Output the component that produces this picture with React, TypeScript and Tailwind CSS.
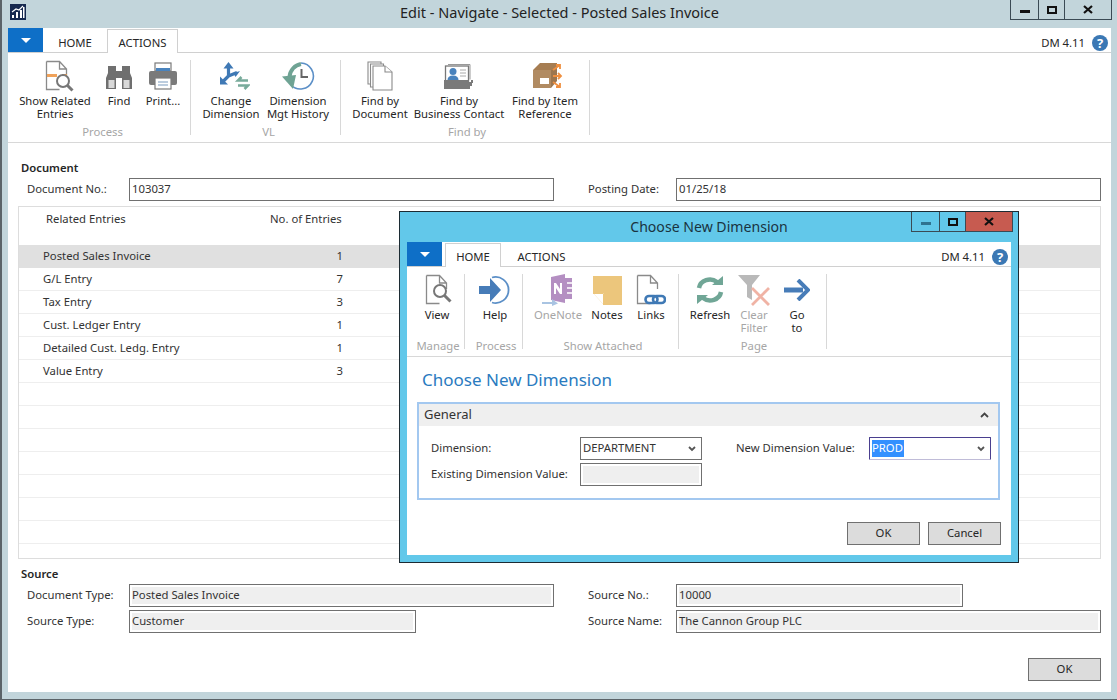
import type { ReactNode } from "react";

const font = { fontFamily: '"Noto Sans", "Open Sans", sans-serif' };

function Logo() {
  return (
    <svg width="16" height="16" viewBox="0 0 16 16">
      <rect width="16" height="16" fill="#16294f" />
      <path d="M2 14v-3h2v3zM6 14V8h2v6zM10 14V6h2v8z" fill="#fff" />
      <path d="M2 8l4-3 3 1 4-4" stroke="#fff" strokeWidth="1.2" fill="none" />
      <path d="M13 14V3h1.5v11z" fill="#fff" />
    </svg>
  );
}

function DocOutline({ color = "#8a8a8a" }: { color?: string }) {
  return <path d="M1.5 1.5h13l7 7.5v6M14.5 1.5V9h7M1.5 1.5v28h13" fill="none" stroke={color} strokeWidth="1.3" />;
}

function RelatedIcon() {
  return (
    <svg className="ml-[9px]" width="30" height="32" viewBox="0 0 30 32">
      <DocOutline />
      <rect x="2" y="14" width="10" height="3" fill="#f0a25a" />
      <rect x="17" y="14" width="5" height="2" fill="#f0a25a" />
      <circle cx="18" cy="21" r="6" fill="#fff" stroke="#777" strokeWidth="2" />
      <path d="M22.5 25.5l5 5" stroke="#777" strokeWidth="3" />
    </svg>
  );
}

function BinocularsIcon() {
  return (
    <svg width="28" height="26" viewBox="0 0 28 26">
      <path d="M3 3h8v5h6V3h8v7l2 5v11h-10V15h-6v11H1V15l2-5z" fill="#6f6f6f" />
      <rect x="3.5" y="17" width="6" height="8" fill="#d8d8d8" />
      <rect x="18.5" y="17" width="6" height="8" fill="#d8d8d8" />
    </svg>
  );
}

function PrinterIcon() {
  return (
    <svg width="30" height="28" viewBox="0 0 30 28">
      <rect x="7" y="1" width="16" height="8" fill="#fff" stroke="#7a7a7a" strokeWidth="1.2" />
      <rect x="8" y="6" width="14" height="3" fill="#4a83bd" />
      <path d="M3 9h24a2 2 0 0 1 2 2v10a2 2 0 0 1-2 2H3a2 2 0 0 1-2-2V11a2 2 0 0 1 2-2z" fill="#7a7a7a" />
      <rect x="7" y="16" width="16" height="11" fill="#fff" stroke="#7a7a7a" strokeWidth="1.2" />
      <path d="M10 20h10M10 23h10" stroke="#7a9cc0" strokeWidth="1.2" />
    </svg>
  );
}

function ChangeDimIcon() {
  return (
    <svg className="ml-[7px]" width="30" height="30" viewBox="0 0 30 30">
      <path d="M8.5 15V5M8.5 15L3.5 20M8.5 15L17 11.5" fill="none" stroke="#3f79b5" strokeWidth="3.2" />
      <path d="M8.5 1l5 6.5h-10zM0 23.5v-8l8 8zM20 10l-4.500 6-2-4z" fill="#3f79b5" />
      <path d="M28 19.5H18l3.5-3.5" fill="none" stroke="#78ab9b" strokeWidth="2.6" />
      <path d="M18 24.5h10l-3.5 3.5" fill="none" stroke="#78ab9b" strokeWidth="2.6" />
    </svg>
  );
}

function HistoryIcon() {
  return (
    <svg width="33" height="29" viewBox="0 0 33 29">
      <path d="M19 1A13 13 0 1 1 9 23" fill="none" stroke="#5b8fc7" strokeWidth="1.6" />
      <path d="M7.5 15C8 8 13 3 19 2" fill="none" stroke="#6fa394" strokeWidth="4" />
      <path d="M0 14.5l14-1.5-3 14z" fill="#6fa394" />
      <path d="M19.5 7v8h6.5" fill="none" stroke="#666" strokeWidth="2" />
    </svg>
  );
}

function DocStackIcon() {
  return (
    <svg width="26" height="30" viewBox="0 0 26 30" fill="#fff" stroke="#8a8a8a" strokeWidth="1.1">
      <path d="M1 1h13v22H1z" />
      <path d="M3.5 3h13v23h-13z" />
      <path d="M6 5h12l7 6v18H6z" />
      <path d="M18 5v6h7" />
    </svg>
  );
}

function ContactIcon() {
  return (
    <svg width="30" height="27" viewBox="0 0 30 27">
      <path d="M4 1.5h22v15" fill="none" stroke="#999" strokeWidth="1" />
      <rect x="1.5" y="3" width="23" height="17" fill="#fff" stroke="#777" strokeWidth="1.3" />
      <circle cx="9" cy="8.5" r="3.5" fill="#4a83bd" />
      <path d="M3.5 17c0-3 2-4.5 5.5-4.5s5.500 1.500 5.500 4.500z" fill="#4a83bd" />
      <path d="M16 7h6M16 10h6M16 13h6" stroke="#aaa" strokeWidth="1" />
      <path d="M0 17h25v2h2v-2h2v3h-1v3h-2v3H0z" fill="#7a7a7a" />
    </svg>
  );
}

function ItemRefIcon() {
  return (
    <svg className="ml-[6px]" width="30" height="28" viewBox="0 0 30 28">
      <path d="M0 8l7-7h17v7z" fill="#a67d52" />
      <rect y="8" width="18" height="18" fill="#b18b62" />
      <path d="M18 8h6v11l-6 7z" fill="#9c764e" />
      <rect x="7" y="16" width="9" height="6" fill="#fff" />
      <path d="M20 14h8M25 11l3 3-3 3M20 8l7-5M23 3h4v4M20 20l7 5M23 25h4v-4" fill="none" stroke="#ef8f3f" strokeWidth="1.8" />
    </svg>
  );
}

function ViewIcon() {
  return (
    <svg className="ml-[3px]" width="28" height="32" viewBox="0 0 28 32">
      <DocOutline />
      <circle cx="15" cy="17" r="6" fill="#fff" stroke="#777" strokeWidth="2" />
      <path d="M19.5 21.5l6 6" stroke="#777" strokeWidth="3" />
    </svg>
  );
}

function HelpArrowIcon() {
  return (
    <svg width="32" height="30" viewBox="0 0 32 30">
      <path d="M13 2.5A13 13 0 1 1 13 27.5" fill="none" stroke="#5b8fc7" strokeWidth="1.8" />
      <path d="M0 11h11V3l11 12-11 12v-8H0z" fill="#477cb8" />
    </svg>
  );
}

function OneNoteIcon() {
  return (
    <svg width="32" height="32" viewBox="0 0 32 32">
      <path d="M9 3l14-3v29l-14-3z" fill="#b48fc2" />
      <rect x="23" y="4" width="7" height="21" fill="#b48fc2" />
      <path d="M25 9h5M25 14h5M25 19h5" stroke="#fff" strokeWidth="1.4" />
      <path d="M12 20v-11h2l4 6v-6h2v11h-2l-4-6v6z" fill="#fff" />
      <path d="M0 28h10v-3l6 4.5-6 2.5v-2H0z" fill="#a9c4e2" />
    </svg>
  );
}

function NotesIcon() {
  return (
    <svg width="29" height="29" viewBox="0 0 29 29">
      <path d="M0 0h29v29H11L0 17z" fill="#ecc67c" />
      <path d="M0 17h11v12z" fill="#fff" />
      <path d="M0 17.5h10.5V29" fill="none" stroke="#ecc67c" strokeWidth="1" />
    </svg>
  );
}

function LinksIcon() {
  return (
    <svg width="30" height="32" viewBox="0 0 30 32">
      <DocOutline />
      <rect x="9.5" y="22" width="12" height="7" rx="3.5" fill="none" stroke="#3f79b5" strokeWidth="2.6" />
      <rect x="17" y="22" width="12" height="7" rx="3.5" fill="none" stroke="#3f79b5" strokeWidth="2.6" />
    </svg>
  );
}

function RefreshIcon() {
  return (
    <svg width="28" height="28" viewBox="0 0 28 28">
      <path d="M3 12A11 10 0 0 1 21 6" fill="none" stroke="#70a696" strokeWidth="4.5" />
      <path d="M16 9h11V0z" fill="#70a696" />
      <path d="M25 16A11 10 0 0 1 7 22" fill="none" stroke="#70a696" strokeWidth="4.5" />
      <path d="M12 19H1v9z" fill="#70a696" />
    </svg>
  );
}

function ClearFilterIcon() {
  return (
    <svg width="32" height="31" viewBox="0 0 32 31">
      <path d="M0 0h22l-8 10v15l-5-3V10z" fill="#b9b9b9" />
      <path d="M14 30l17-17M14 13l17 17" stroke="#f0b3a5" strokeWidth="2.8" />
    </svg>
  );
}

function GoToIcon() {
  return (
    <svg width="26" height="22" viewBox="0 0 26 22">
      <path d="M0 8.5h19v5H0z" fill="#477cb8" />
      <path d="M14 1l10 10-10 10" fill="none" stroke="#477cb8" strokeWidth="4" />
    </svg>
  );
}

function ChevronDown() {
  return (
    <svg width="8" height="6" viewBox="0 0 8 6">
      <path d="M1 1l3 3 3-3" fill="none" stroke="#555" strokeWidth="1.8" />
    </svg>
  );
}

function WindowButtons({ dialog }: { dialog?: boolean }) {
  return (
    <div className="flex h-[20px] border-r border-b border-l border-[#3a4a54]">
      <div className="flex w-[28px] items-center justify-center border-r border-[#3a4a54]">
        <div className={dialog ? "mt-[3px] h-[3px] w-[10px] bg-[#2f7390]" : "mt-[3px] h-[3px] w-[10px] bg-[#111]"} />
      </div>
      <div className="flex w-[26px] items-center justify-center border-r border-[#3a4a54]">
        <div className="h-[8px] w-[10px] border-2 border-[#111]" />
      </div>
      <div className={dialog ? "flex w-[46px] items-center justify-center bg-[#c75b50]" : "flex w-[46px] items-center justify-center"}>
        <svg width="10" height="9" viewBox="0 0 10 9">
          <path d="M1 1l8 7M9 1L1 8" stroke="#111" strokeWidth="2.2" />
        </svg>
      </div>
    </div>
  );
}

function HelpDot() {
  return (
    <div className="flex h-[16px] w-[16px] items-center justify-center rounded-full bg-[#3b78b4] text-[13px] leading-none font-bold text-white">
      ?
    </div>
  );
}

function TabsRow({ active }: { active: "HOME" | "ACTIONS" }) {
  const tab = (name: string, cls: string) =>
    active === name ? (
      <div className={"relative -mb-px flex h-[24px] items-center justify-center border border-b-0 border-[#d0d0d0] bg-white pt-[4px] " + cls}>{name}</div>
    ) : (
      <div className={"flex h-[24px] items-center justify-center pt-[6px] " + cls}>{name}</div>
    );
  return (
    <div className="flex h-[25px] items-end border-b border-[#d0d0d0] text-[11.3px] text-[#262626]">
      <div className="flex h-[24px] w-[35px] items-center justify-center bg-[#0e6fc7]">
        <div className="h-0 w-0 border-x-[5px] border-t-[5px] border-x-transparent border-t-white" />
      </div>
      {active === "HOME" ? (
        <>
          {tab("HOME", "ml-[3px] w-[56px]")}
          {tab("ACTIONS", "ml-[16px] w-[49px]")}
        </>
      ) : (
        <>
          {tab("HOME", "ml-[14px] w-[36px]")}
          {tab("ACTIONS", "ml-[14px] w-[71px]")}
        </>
      )}
      <div className="mr-[3px] ml-auto flex h-[24px] items-center gap-[7px] pt-[6px]">
        <span>DM 4.11</span>
        <HelpDot />
      </div>
    </div>
  );
}

function Item({ label, icon, w, off }: { label: ReactNode; icon: ReactNode; w: string; off?: boolean }) {
  return (
    <div className={"flex flex-col items-center " + w}>
      <div className="flex h-[32px] items-center justify-center">{icon}</div>
      <div className={off ? "mt-[2px] text-center text-[11.3px] leading-[13px] whitespace-nowrap text-[#a6a6a6]" : "mt-[2px] text-center text-[11.3px] leading-[13px] whitespace-nowrap text-[#262626]"}>{label}</div>
    </div>
  );
}

function Group({ label, cls, children }: { label: string; cls: string; children: ReactNode }) {
  return (
    <div className={"flex h-[75px] flex-col border-r border-[#d8d8d8] " + cls}>
      <div className="flex">{children}</div>
      <div className="mt-auto -mb-[3px] text-center text-[11.3px] leading-[13px] text-[#a6a6a6]">{label}</div>
    </div>
  );
}

function Field({ label, value, labelW, w, readOnly }: { label: string; value: string; labelW: string; w: string; readOnly?: boolean }) {
  return (
    <div className="flex h-[23px] items-center">
      <div className={"text-[11.3px] whitespace-nowrap text-[#333] " + labelW}>{label}</div>
      <div className={"h-[23px] border border-[#707070] p-[2px] " + w}>
        <div className={readOnly ? "flex h-full items-center bg-[#efefef] text-[11.3px] text-[#333]" : "flex h-full items-center text-[11.3px] text-[#333]"}>{value}</div>
      </div>
    </div>
  );
}

function Btn({ children }: { children: ReactNode }) {
  return (
    <div className="flex h-[23px] w-[73px] items-center justify-center border border-[#707070] bg-[#dcdcdc] text-[11.3px] text-[#262626]">
      {children}
    </div>
  );
}

const rows: [string, string][] = [
  ["Posted Sales Invoice", "1"],
  ["G/L Entry", "7"],
  ["Tax Entry", "3"],
  ["Cust. Ledger Entry", "1"],
  ["Detailed Cust. Ledg. Entry", "1"],
  ["Value Entry", "3"],
  ["", ""],
  ["", ""],
  ["", ""],
  ["", ""],
  ["", ""],
  ["", ""],
  ["", ""],
];

function Dialog() {
  return (
    <div className="absolute top-[211px] left-[397px] flex h-[352px] w-[620px] flex-col border border-[#1c2b33] bg-[#62c8ea] px-[7px] pb-[7px]">
      <div className="-mx-[2px] grid h-[30px] grid-cols-[1fr_auto_1fr] items-start">
        <div />
        <div className="mt-[5px] text-[14.1px] leading-[20px] text-[#1a3340]">Choose New Dimension</div>
        <div className="flex justify-end">
          <WindowButtons dialog />
        </div>
      </div>
      <div className="flex flex-1 flex-col bg-white">
        <TabsRow active="HOME" />
        <div className="flex h-[90px] border-b border-[#d8d8d8] pt-[7px]">
          <Group label="Manage" cls="w-[58px] pl-[5px]">
            <Item w="w-[50px]" label="View" icon={<ViewIcon />} />
          </Group>
          <Group label="Process" cls="w-[58px] pl-[5px]">
            <Item w="w-[50px]" label="Help" icon={<HelpArrowIcon />} />
          </Group>
          <Group label="Show Attached" cls="w-[156px] pl-[5px]">
            <Item w="w-[60px]" off label="OneNote" icon={<OneNoteIcon />} />
            <Item w="w-[38px]" label="Notes" icon={<NotesIcon />} />
            <Item w="w-[50px]" label="Links" icon={<LinksIcon />} />
          </Group>
          <Group label="Page" cls="w-[148px] pl-[3px]">
            <Item w="w-[56px]" label="Refresh" icon={<RefreshIcon />} />
            <Item w="w-[32px]" off label={<>Clear<br />Filter</>} icon={<ClearFilterIcon />} />
            <Item w="w-[54px]" label={<>Go<br />to</>} icon={<GoToIcon />} />
          </Group>
        </div>
        <div className="mt-[11px] ml-[15px] text-[17px] leading-[24px] text-[#2a7bbf]">Choose New Dimension</div>
        <div className="mt-[10px] ml-[10px] h-[98px] w-[583px] border-2 border-[#a3c8f0]">
          <div className="flex h-[22px] items-center justify-between bg-[#efefef] pr-[9px] pl-[5px] text-[13px] text-[#333]">
            <span>General</span>
            <svg width="9" height="6" viewBox="0 0 9 6">
              <path d="M1 5l3.5-3.5L8 5" fill="none" stroke="#444" strokeWidth="1.8" />
            </svg>
          </div>
          <div className="flex pt-[11px] pl-[12px]">
            <div className="flex w-[271px] flex-col gap-[3px]">
              <div className="flex h-[23px] items-center">
                <div className="w-[149px] text-[11.3px] text-[#333]">Dimension:</div>
                <div className="flex h-[23px] w-[122px] items-center justify-between border border-[#707070] pr-[5px] pl-[2px] text-[11.3px] text-[#333]">
                  DEPARTMENT
                  <ChevronDown />
                </div>
              </div>
              <Field label="Existing Dimension Value:" value="" labelW="w-[149px]" w="w-[122px]" readOnly />
            </div>
            <div className="ml-[34px] flex h-[23px] items-center">
              <div className="w-[133px] text-[11.3px] whitespace-nowrap text-[#333]">New Dimension Value:</div>
              <div className="flex h-[23px] w-[122px] items-center justify-between rounded-[1px] border border-[#4a3f8f] border-b-[#c0bcd8] pr-[5px] pl-[2px] text-[11.3px]">
                <span className="bg-[#3390ff] pr-[1px] text-white">PROD</span>
                <ChevronDown />
              </div>
            </div>
          </div>
        </div>
        <div className="mt-[22px] flex justify-end gap-[8px] pr-[10px]">
          <Btn>OK</Btn>
          <Btn>Cancel</Btn>
        </div>
      </div>
    </div>
  );
}

export default function App() {
  return (
    <div style={font} className="relative flex h-[700px] w-[1117px] flex-col overflow-hidden border-b border-l-2 border-[#5b6368] bg-[#c2d5db]">
      {/* title bar */}
      <div className="grid h-[28px] grid-cols-[1fr_auto_1fr] items-start">
        <div className="mt-[4px] ml-[8px]">
          <Logo />
        </div>
        <div className="mt-[2px] text-[14.5px] leading-[20px] text-[#222]">Edit - Navigate - Selected - Posted Sales Invoice</div>
        <div className="mr-[5px] flex justify-end">
          <WindowButtons />
        </div>
      </div>

      <div className="mr-[6px] mb-[7px] ml-[6px] flex flex-1 flex-col bg-white">
        <TabsRow active="ACTIONS" />
        <div className="flex h-[90px] border-b border-[#d8d8d8] pt-[7px]">
          <Group label="Process" cls="w-[183px] pl-[7px]">
            <Item w="w-[80px]" label={<>Show Related<br />Entries</>} icon={<RelatedIcon />} />
            <Item w="w-[48px]" label="Find" icon={<BinocularsIcon />} />
            <Item w="w-[40px]" label="Print..." icon={<PrinterIcon />} />
          </Group>
          <Group label="VL" cls="w-[150px] pl-[6px]">
            <Item w="w-[68px]" label={<>Change<br />Dimension</>} icon={<ChangeDimIcon />} />
            <Item w="w-[66px]" label={<>Dimension<br />Mgt History</>} icon={<HistoryIcon />} />
          </Group>
          <Group label="Find by" cls="w-[249px] pl-[4px]">
            <Item w="w-[70px]" label={<>Find by<br />Document</>} icon={<DocStackIcon />} />
            <Item w="w-[88px]" label={<>Find by<br />Business Contact</>} icon={<ContactIcon />} />
            <Item w="w-[84px]" label={<>Find by Item<br />Reference</>} icon={<ItemRefIcon />} />
          </Group>
        </div>

        <div className="flex flex-1 flex-col pr-[10px] pl-[10px]">
          <div className="mt-[17px] ml-[3px] text-[11.3px] leading-[16px] font-semibold text-[#262626]">Document</div>
          <div className="mt-[2px] flex pl-[9px]">
            <div className="mr-[34px] w-[527px]">
              <Field label="Document No.:" value="103037" labelW="w-[102px]" w="w-[425px]" />
            </div>
            <Field label="Posting Date:" value="01/25/18" labelW="w-[88px]" w="w-[425px]" />
          </div>

          <div className="mt-[5px] h-[353px] border border-[#dddddd] text-[11.3px] text-[#333]">
            <div className="flex h-[38px] pt-[4px] leading-[16px]">
              <div className="w-[251px] pl-[27px]">Related Entries</div>
              <div className="w-[71px] whitespace-nowrap">No. of Entries</div>
            </div>
            {rows.map(([name, count], i) => (
              <div key={i} className={i === 0 ? "flex h-[23px] items-center bg-[#e0e0e0]" : "flex h-[23px] items-center border-b border-[#eeeeee]"}>
                <div className="w-[300px] pl-[24px]">{name}</div>
                <div className="w-[24px] text-right">{count}</div>
              </div>
            ))}
          </div>

          <div className="mt-[7px] ml-[3px] text-[11.3px] leading-[16px] font-semibold text-[#262626]">Source</div>
          <div className="mt-[2px] flex flex-col gap-[3px] pl-[9px]">
            <div className="flex">
              <div className="mr-[34px] w-[527px]">
                <Field label="Document Type:" value="Posted Sales Invoice" labelW="w-[102px]" w="w-[425px]" readOnly />
              </div>
              <Field label="Source No.:" value="10000" labelW="w-[88px]" w="w-[287px]" readOnly />
            </div>
            <div className="flex">
              <div className="mr-[34px] w-[527px]">
                <Field label="Source Type:" value="Customer" labelW="w-[102px]" w="w-[287px]" readOnly />
              </div>
              <Field label="Source Name:" value="The Cannon Group PLC" labelW="w-[88px]" w="w-[425px]" readOnly />
            </div>
          </div>
          <div className="mt-[25px] flex justify-end">
            <Btn>OK</Btn>
          </div>
        </div>
      </div>

      <Dialog />
    </div>
  );
}
